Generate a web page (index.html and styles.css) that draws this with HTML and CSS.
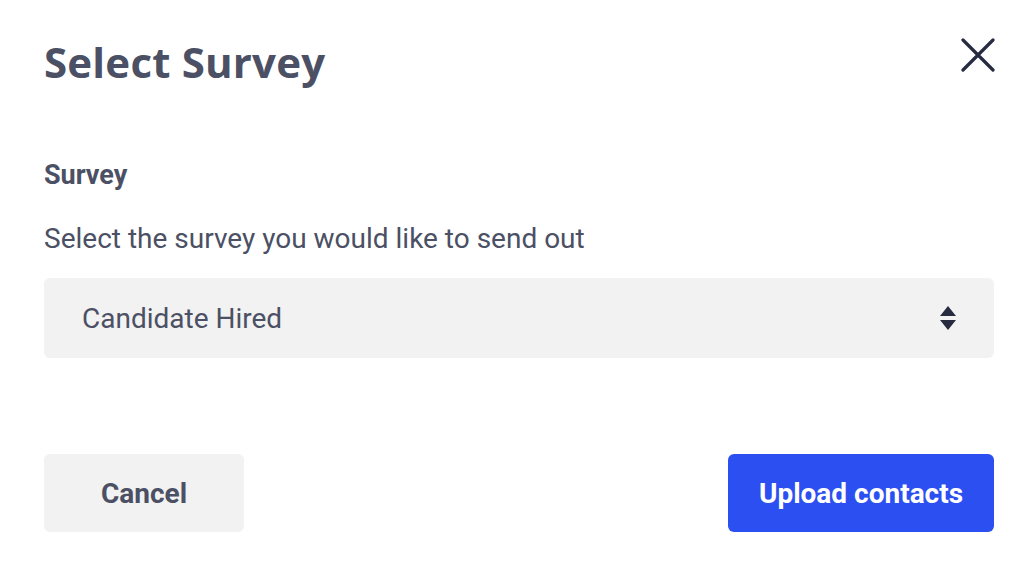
FILE: index.html
```html
<!DOCTYPE html>
<html>
<head>
<meta charset="utf-8">
<link rel="stylesheet" href="styles.css">
</head>
<body>
<div class="modal">
  <div class="header">
    <h1 class="title">Select Survey</h1>
    <button class="close" aria-label="Close">
      <svg width="34" height="34" viewBox="0 0 34 34"><path d="M2 2 L32 32 M32 2 L2 32" stroke="#262b3f" stroke-width="3.2" stroke-linecap="round" fill="none"/></svg>
    </button>
  </div>
  <div class="field">
    <div class="label">Survey</div>
    <div class="hint">Select the survey you would like to send out</div>
    <div class="select">
      <span class="value">Candidate Hired</span>
      <svg class="arrows" width="18" height="26" viewBox="0 0 18 26"><path d="M9 1 L17 11 L1 11 Z M1 15 L17 15 L9 25 Z" fill="#262b3f"/></svg>
    </div>
  </div>
  <div class="actions">
    <button class="btn cancel">Cancel</button>
    <button class="btn primary">Upload contacts</button>
  </div>
</div>
</body>
</html>
```
FILE: styles.css
```css
html, body { margin: 0; padding: 0; background: #fff; }
body { font-family: Roboto, "Liberation Sans", sans-serif; color: #4b5064; }
.modal { width: 950px; padding: 0 28px 0 44px; }
.header { display: flex; justify-content: space-between; align-items: flex-start; padding-top: 36px; height: 80px; }
.title { margin: 0; font-family: "Open Sans", "Liberation Sans", sans-serif; font-weight: 700; font-size: 42px; line-height: 52px; color: #4b5064; letter-spacing: 0.2px; }
.close { border: none; background: none; padding: 0; margin-top: 2px; margin-right: -1px; width: 34px; height: 34px; cursor: pointer; }
.close svg { display: block; }
.field { margin-top: 44px; }
.label { font-weight: 700; font-size: 27px; line-height: 30px; }
.hint { font-size: 28px; line-height: 30px; margin-top: 34px; }
.select { margin-top: 24px; height: 80px; background: #f2f2f2; border-radius: 6px; display: flex; align-items: center; justify-content: space-between; padding: 0 37px 0 38px; }
.value { font-size: 28px; color: #4b5064; }
.arrows { display: block; }
.actions { display: flex; justify-content: space-between; margin-top: 96px; }
.btn { height: 78px; border: none; border-radius: 6px; font-family: Roboto, "Liberation Sans", sans-serif; font-weight: 700; font-size: 28px; cursor: pointer; }
.cancel { width: 200px; background: #f2f2f2; color: #4b5064; }
.primary { width: 266px; background: #2c4ff2; color: #fff; }
```
